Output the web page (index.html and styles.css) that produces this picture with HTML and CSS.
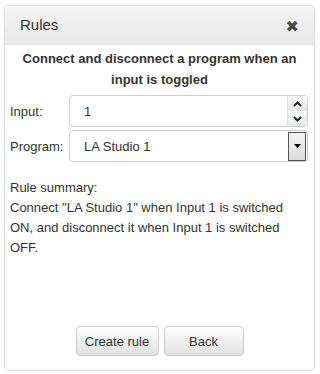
FILE: index.html
```html
<!DOCTYPE html>
<html>
<head>
	<meta charset="UTF-8">
	<title>Rules</title>
	<link rel="stylesheet" href="styles.css">
</head>
<body>
	<div class="panel">
		<div class="panel-head">
			<span class="panel-title">Rules</span>
			<span class="close">&#x2716;</span>
		</div>
		<div class="panel-body">
			<h4 class="lead">Connect and disconnect a program when an input is toggled</h4>

			<div class="row">
				<label class="label">Input:</label>
				<div class="field">
					<span class="value">1</span>
					<div class="spin">
						<span class="spin-btn">
							<svg width="9" height="6" viewBox="0 0 9 6"><path d="M1 5 L4.5 1.5 L8 5" fill="none" stroke="#1e2c3c" stroke-width="2"/></svg>
						</span>
						<span class="spin-btn">
							<svg width="9" height="6" viewBox="0 0 9 6"><path d="M1 1 L4.5 4.5 L8 1" fill="none" stroke="#1e2c3c" stroke-width="2"/></svg>
						</span>
					</div>
				</div>
			</div>

			<div class="row">
				<label class="label">Program:</label>
				<div class="field">
					<span class="value">LA Studio 1</span>
					<span class="drop">
						<svg width="7" height="4" viewBox="0 0 7 4"><path d="M0 0 L7 0 L3.5 4 Z" fill="#000"/></svg>
					</span>
				</div>
			</div>

			<p class="summary">Rule summary:<br>Connect "LA Studio 1" when Input 1 is switched ON, and disconnect it when Input 1 is switched OFF.</p>

			<div class="actions">
				<button class="btn">Create rule</button>
				<button class="btn">Back</button>
			</div>
		</div>
	</div>
</body>
</html>
```

FILE: styles.css
```css
*
{
	margin: 0px;
	padding: 0px;
	box-sizing: border-box;
}
body
{
	font-family: "Liberation Sans", Arial, sans-serif;
	font-size: 13px;
	color: #333;
	background: #fff;
}
.panel
{
	margin: 5px 0 0 4px;
	width: 311px;
	height: 366px;
	border: 1px solid #ddd;
	border-radius: 4px;
	display: flex;
	flex-direction: column;
}
.panel-head
{
	height: 39px;
	padding: 0 15px 0 15px;
	display: flex;
	align-items: center;
	justify-content: space-between;
	border-bottom: 1px solid #ddd;
	border-radius: 3px 3px 0 0;
	background: linear-gradient(#f5f5f5, #e8e8e8);
}
.panel-title
{
	font-size: 15px;
	color: #333;
	margin-top: -2px;
}
.close
{
	font-size: 16px;
	color: #4a4a4a;
	font-family: "DejaVu Sans", sans-serif;
	margin-top: 3px;
}
.panel-body
{
	flex: 1;
	padding: 3px 5px 14px 5px;
	display: flex;
	flex-direction: column;
}
.lead
{
	font-size: 13px;
	font-weight: bold;
	text-align: center;
	line-height: 21px;
	margin-bottom: 5px;
}
.row
{
	display: flex;
	align-items: center;
	margin-bottom: 3px;
}
.label
{
	width: 59px;
}
.field
{
	flex: 1;
	height: 32px;
	margin-right: 1px;
	border: 1px solid #ccc;
	border-radius: 4px;
	display: flex;
	align-items: center;
	justify-content: space-between;
	padding-left: 14px;
}
.spin
{
	height: 30px;
	width: 20px;
	display: flex;
	flex-direction: column;
	border-left: 1px solid #e4e4e4;
}
.spin-btn
{
	flex: 1;
	display: flex;
	align-items: center;
	justify-content: center;
	background: linear-gradient(#fafafa, #e9e9e9);
}
.drop
{
	width: 18px;
	height: 29px;
	margin-right: 1px;
	border: 1px solid #555;
	background: linear-gradient(#f4f4f4, #dcdcdc);
	display: flex;
	align-items: center;
	justify-content: center;
}
.summary
{
	margin-top: 13px;
	line-height: 20px;
}
.actions
{
	margin-top: auto;
	display: flex;
	justify-content: center;
	gap: 5px;
}
.btn
{
	font-family: "Liberation Sans", Arial, sans-serif;
	font-size: 13px;
	color: #333;
	height: 30px;
	width: 83px;
	border: 1px solid #ccc;
	border-radius: 4px;
	background: linear-gradient(#fff, #e0e0e0);
}
.btn + .btn
{
	width: 80px;
}
```
